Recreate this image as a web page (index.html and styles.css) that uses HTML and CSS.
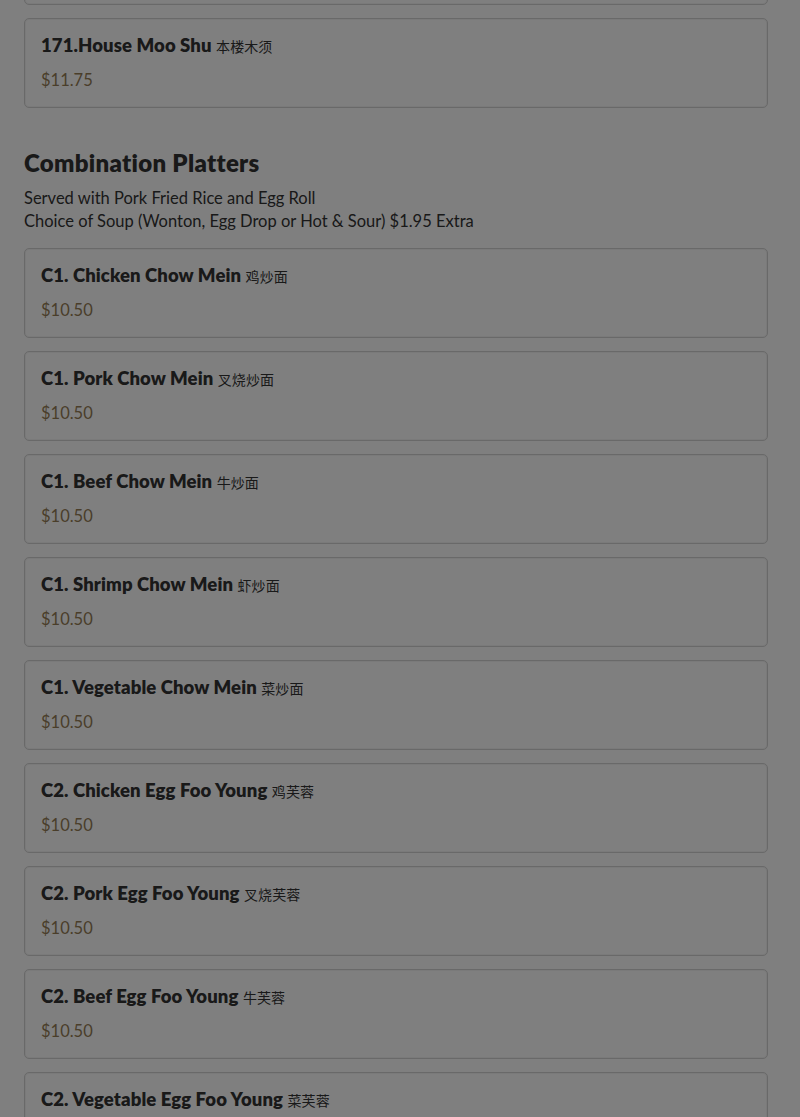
FILE: index.html
```html
<!DOCTYPE html>
<html lang="en">
<head>
<meta charset="utf-8">
<title>Menu</title>
<link rel="stylesheet" href="styles.css">
</head>
<body>
<main class="menu">
  <section class="section">
    <div class="item item-clipped"></div>
    <div class="item">
      <div class="item-name">171.House Moo Shu <span class="zh">本楼木须</span></div>
      <div class="item-price">$11.75</div>
    </div>
  </section>

  <section class="section">
    <h2 class="section-title">Combination Platters</h2>
    <p class="section-desc">Served with Pork Fried Rice and Egg Roll<br>Choice of Soup (Wonton, Egg Drop or Hot &amp; Sour) $1.95 Extra</p>
    <div class="item">
      <div class="item-name">C1. Chicken Chow Mein <span class="zh">鸡炒面</span></div>
      <div class="item-price">$10.50</div>
    </div>
    <div class="item">
      <div class="item-name">C1. Pork Chow Mein <span class="zh">叉烧炒面</span></div>
      <div class="item-price">$10.50</div>
    </div>
    <div class="item">
      <div class="item-name">C1. Beef Chow Mein <span class="zh">牛炒面</span></div>
      <div class="item-price">$10.50</div>
    </div>
    <div class="item">
      <div class="item-name">C1. Shrimp Chow Mein <span class="zh">虾炒面</span></div>
      <div class="item-price">$10.50</div>
    </div>
    <div class="item">
      <div class="item-name">C1. Vegetable Chow Mein <span class="zh">菜炒面</span></div>
      <div class="item-price">$10.50</div>
    </div>
    <div class="item">
      <div class="item-name">C2. Chicken Egg Foo Young <span class="zh">鸡芙蓉</span></div>
      <div class="item-price">$10.50</div>
    </div>
    <div class="item">
      <div class="item-name">C2. Pork Egg Foo Young <span class="zh">叉烧芙蓉</span></div>
      <div class="item-price">$10.50</div>
    </div>
    <div class="item">
      <div class="item-name">C2. Beef Egg Foo Young <span class="zh">牛芙蓉</span></div>
      <div class="item-price">$10.50</div>
    </div>
    <div class="item">
      <div class="item-name">C2. Vegetable Egg Foo Young <span class="zh">菜芙蓉</span></div>
      <div class="item-price">$10.50</div>
    </div>
  </section>
</main>
<div class="backdrop"></div>
</body>
</html>
```
FILE: styles.css
```css
html, body {
  margin: 0;
  padding: 0;
  background: #ffffff;
  overflow: hidden;
}
body {
  font-family: Lato, "Noto Sans", "Noto Sans CJK SC", sans-serif;
  color: #333333;
}
.menu {
  margin-top: -85px;
  padding: 0 32px 0 24px;
  display: flex;
  flex-direction: column;
  gap: 40px;
}
.section {
  display: flex;
  flex-direction: column;
  gap: 13px;
}
.section-title {
  margin: 0;
  font-size: 24px;
  line-height: 30px;
  font-weight: 800;
  color: #333333;
  letter-spacing: 0.3px;
}
.section-desc {
  margin: -4px 0 2px;
  font-size: 16.5px;
  line-height: 23px;
  color: #333333;
}
.item {
  border: 1px solid #d2d2d2;
  border-radius: 5px;
  padding: 16px;
  height: 56px;
  display: flex;
  flex-direction: column;
  gap: 12px;
  box-shadow: inset 0 0 0 1px #f4f4f4;
}
.item-name {
  font-size: 18.5px;
  line-height: 20px;
  font-weight: 800;
  color: #333333;
  letter-spacing: 0.1px;
}
.zh {
  font-family: "Noto Sans CJK SC", sans-serif;
  font-weight: 400;
  font-size: 14px;
}
.item-price {
  font-size: 16.5px;
  line-height: 24px;
  color: #957d55;
}
.backdrop {
  position: fixed;
  inset: 0;
  background: rgba(0, 0, 0, 0.5);
}
```
